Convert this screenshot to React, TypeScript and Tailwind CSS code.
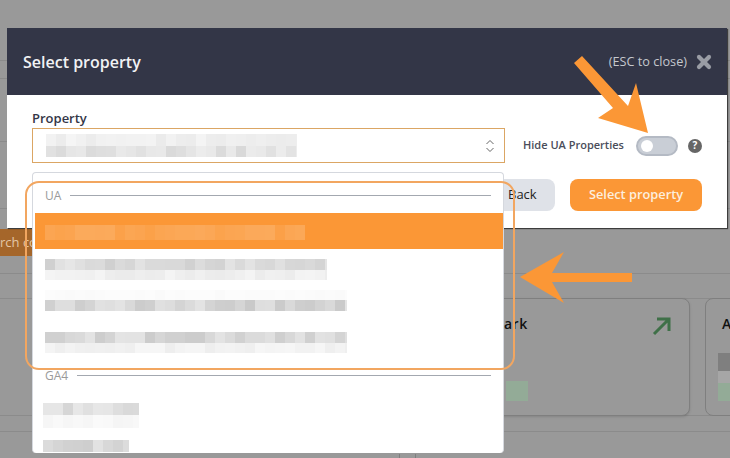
import { X } from 'lucide-react';

// deterministic mosaic standing in for the redacted property names
function Pixelated({ width, rows, seed, tint = '0,0,0' }: { width: number; rows: { h: number; base: number }[]; seed: number; tint?: string }) {
  const cols = Math.ceil(width / 10);
  return (
    <div className="flex flex-col overflow-hidden" style={{ width }}>
      {rows.map((row, r) => (
        <div key={r} className="flex" style={{ height: row.h }}>
          {Array.from({ length: cols }).map((_, c) => {
            const n = Math.abs(Math.sin((c + 1) * 12.9898 + (r + 1) * 78.233 + seed) * 43758.5453) % 1;
            return <div key={c} className="w-[10px] shrink-0" style={{ backgroundColor: `rgba(${tint},${row.base * (0.65 + n * 0.7)})` }} />;
          })}
        </div>
      ))}
    </div>
  );
}

function GroupHeader({ label }: { label: string }) {
  return (
    <div className="h-[36px] flex items-center gap-[9px] px-[12px] pt-[1px] text-[12px] text-[#9a9a9a]">
      <span>{label}</span>
      <div className="flex-1 h-px bg-[#a3a8b0]" />
    </div>
  );
}

function Background() {
  return (
    <div className="absolute inset-0 flex flex-col">
      <div className="h-[61px] border-b border-[#8b8b8b]" />
      <div className="h-[18px] border-b border-[#8b8b8b]" />
      <div className="h-[63px] border-b border-[#8b8b8b]" />
      <div className="h-[67px] border-b border-[#8b8b8b]" />
      <div className="h-[20px]" />
      <div className="h-[27px] w-[40px] bg-[#a5662a] text-[13px] text-[#e2c6a6] pt-[4px] whitespace-nowrap">rch co</div>
      <div className="h-[18px] border-b border-[#8b8b8b]" />
      <div className="h-[25px] border-b border-[#8b8b8b]" />
      <div className="h-[117px] flex gap-[15px] pl-[415px] border-b border-[#8b8b8b] relative">
        <div className="w-[275px] h-[118px] -mt-px border border-[#7f7f7f] rounded-[8px] bg-[#999999] relative shadow-sm shrink-0">
          <span className="absolute left-[88px] top-[14px] text-[14px] font-semibold tracking-[0.5px] text-[#111]">ark</span>
          <svg className="absolute left-[236px] top-[17px]" width="20" height="20" viewBox="0 0 20 20" fill="none" stroke="#3f7048" strokeWidth="3">
            <path d="M2 18 L17 3 M5 3 H17 V15" />
          </svg>
          <div className="absolute left-[90px] top-[82px] w-[22px] h-[20px] bg-[#93ab97]" />
        </div>
        <div className="w-[60px] h-[118px] -mt-px border border-[#7f7f7f] rounded-l-[8px] bg-[#999999] relative shrink-0">
          <span className="absolute left-[16px] top-[14px] text-[14px] font-semibold text-[#111]">A</span>
          <div className="absolute left-[12px] top-[54px] w-[12px] h-[18px] bg-[#7f7f7f]" />
          <div className="absolute left-[12px] top-[72px] w-[12px] h-[12px] bg-[#a6a6a6]" />
          <div className="absolute left-[12px] top-[84px] w-[12px] h-[18px] bg-[#93ab97]" />
        </div>
      </div>
      <div className="h-[16px] border-b border-[#8b8b8b]" />
      <div className="flex-1 pl-[399px] flex items-end">
        <div className="w-[17px] h-[4px] border-x border-[#7f7f7f]" />
      </div>
    </div>
  );
}

export default function App() {
  return (
    <div className="relative w-[730px] h-[458px] overflow-hidden bg-[#999999] font-['Open_Sans',sans-serif]">
      <Background />

      {/* Modal */}
      <div className="absolute left-[7px] top-[28px] w-[720px] h-[200px] bg-white shadow-[1px_1px_1px_rgba(0,0,0,0.6)]">
        <div className="h-[67px] bg-[#333647] flex items-center justify-between pl-[16px] pr-[13px]">
          <h2 className="text-[16px] font-semibold text-[#f1f2f4]">Select property</h2>
          <div className="flex items-center gap-[7px]">
            <span className="text-[12.7px] text-[#c5c8ce]">(ESC to close)</span>
            <X className="w-[20px] h-[20px] text-[#9a9da5]" strokeWidth={5} />
          </div>
        </div>
        <div className="pl-[25px] pr-[25px] pt-[14px]">
          <div className="flex items-end">
            <div className="w-[473px] shrink-0">
              <label className="block text-[13px] font-semibold leading-[19px] text-[#333647]">Property</label>
              <div className="h-[35px] border border-[#dba664] flex items-center justify-between pl-[13px] pr-[9px]">
                <Pixelated width={251} rows={[{ h: 12, base: 0.06 }, { h: 11, base: 0.11 }]} seed={1} />
                <svg width="10" height="14" viewBox="0 0 10 14" fill="none" stroke="#666" strokeWidth="1">
                  <path d="M1.5 5 L5 1.5 L8.5 5 M1.5 9 L5 12.5 L8.5 9" />
                </svg>
              </div>
            </div>
            <div className="flex-1 flex items-center h-[35px] pl-[18px]">
              <span className="text-[11px] font-semibold text-[#4a4d5a] whitespace-nowrap">Hide UA Properties</span>
              <div className="ml-[12px] w-[42px] h-[20px] rounded-full bg-[#c9ced6] border-2 border-[#b4bac4] flex items-center pl-[3px] shrink-0">
                <div className="w-[12px] h-[12px] rounded-full bg-white" />
              </div>
              <div className="ml-[10px] w-[14px] h-[14px] rounded-full bg-[#666] text-white text-[10px] font-bold flex items-center justify-center shrink-0">?</div>
            </div>
          </div>
          <div className="flex justify-end gap-[15px] mt-[16px]">
            <button className="w-[80px] h-[32px] rounded-[8px] bg-[#dfe2e8] text-[13px] text-[#222] text-left pl-[33px]">Back</button>
            <button className="w-[132px] h-[32px] rounded-[8px] bg-[#fb9736] text-[12.8px] font-semibold text-[#fdeedd]">Select property</button>
          </div>
        </div>
      </div>

      {/* Open dropdown */}
      <div className="absolute left-[32px] top-[172px] w-[472px] h-[281px] overflow-hidden rounded-[4px] bg-white border-t border-x border-[#d5d8de] pt-[4px]">
        <GroupHeader label="UA" />
        <div className="h-[36px] bg-[#fb9736] ml-[2px] pl-[10px] pt-[12px]">
          <Pixelated width={260} rows={[{ h: 15, base: 0.14 }]} seed={4} tint="255,255,255" />
        </div>
        <div className="h-[36px] pl-[12px] pt-[10px]">
          <Pixelated width={282} rows={[{ h: 11, base: 0.14 }, { h: 10, base: 0.06 }]} seed={5} />
        </div>
        <div className="h-[36px] pl-[12px] pt-[5px]">
          <Pixelated width={302} rows={[{ h: 10, base: 0.015 }, { h: 11, base: 0.16 }]} seed={6} />
        </div>
        <div className="h-[36px] pl-[12px] pt-[11px]">
          <Pixelated width={302} rows={[{ h: 11, base: 0.15 }, { h: 10, base: 0.05 }]} seed={7} />
        </div>
        <GroupHeader label="GA4" />
        <div className="h-[36px] pl-[10px] pt-[10px]">
          <Pixelated width={96} rows={[{ h: 12, base: 0.14 }, { h: 13, base: 0.03 }]} seed={8} />
        </div>
        <div className="pl-[10px] pt-[11px]">
          <Pixelated width={86} rows={[{ h: 12, base: 0.15 }]} seed={9} />
        </div>
      </div>

      {/* Annotation: outline round the UA group */}
      <div className="absolute left-[25px] top-[181px] w-[490px] h-[189px] rounded-[14px] border-2 border-[#f2a660]" />

      {/* Annotation arrows */}
      <svg className="absolute inset-0 pointer-events-none" width="730" height="458" viewBox="0 0 730 458" fill="#fb9736">
        <polygon points="574,63 582,56 628,106 636,83 648,133 598,118 613,108" />
        <polygon points="520,277 564,252 552,273 632,273 632,282 552,282 564,303" />
      </svg>
    </div>
  );
}
